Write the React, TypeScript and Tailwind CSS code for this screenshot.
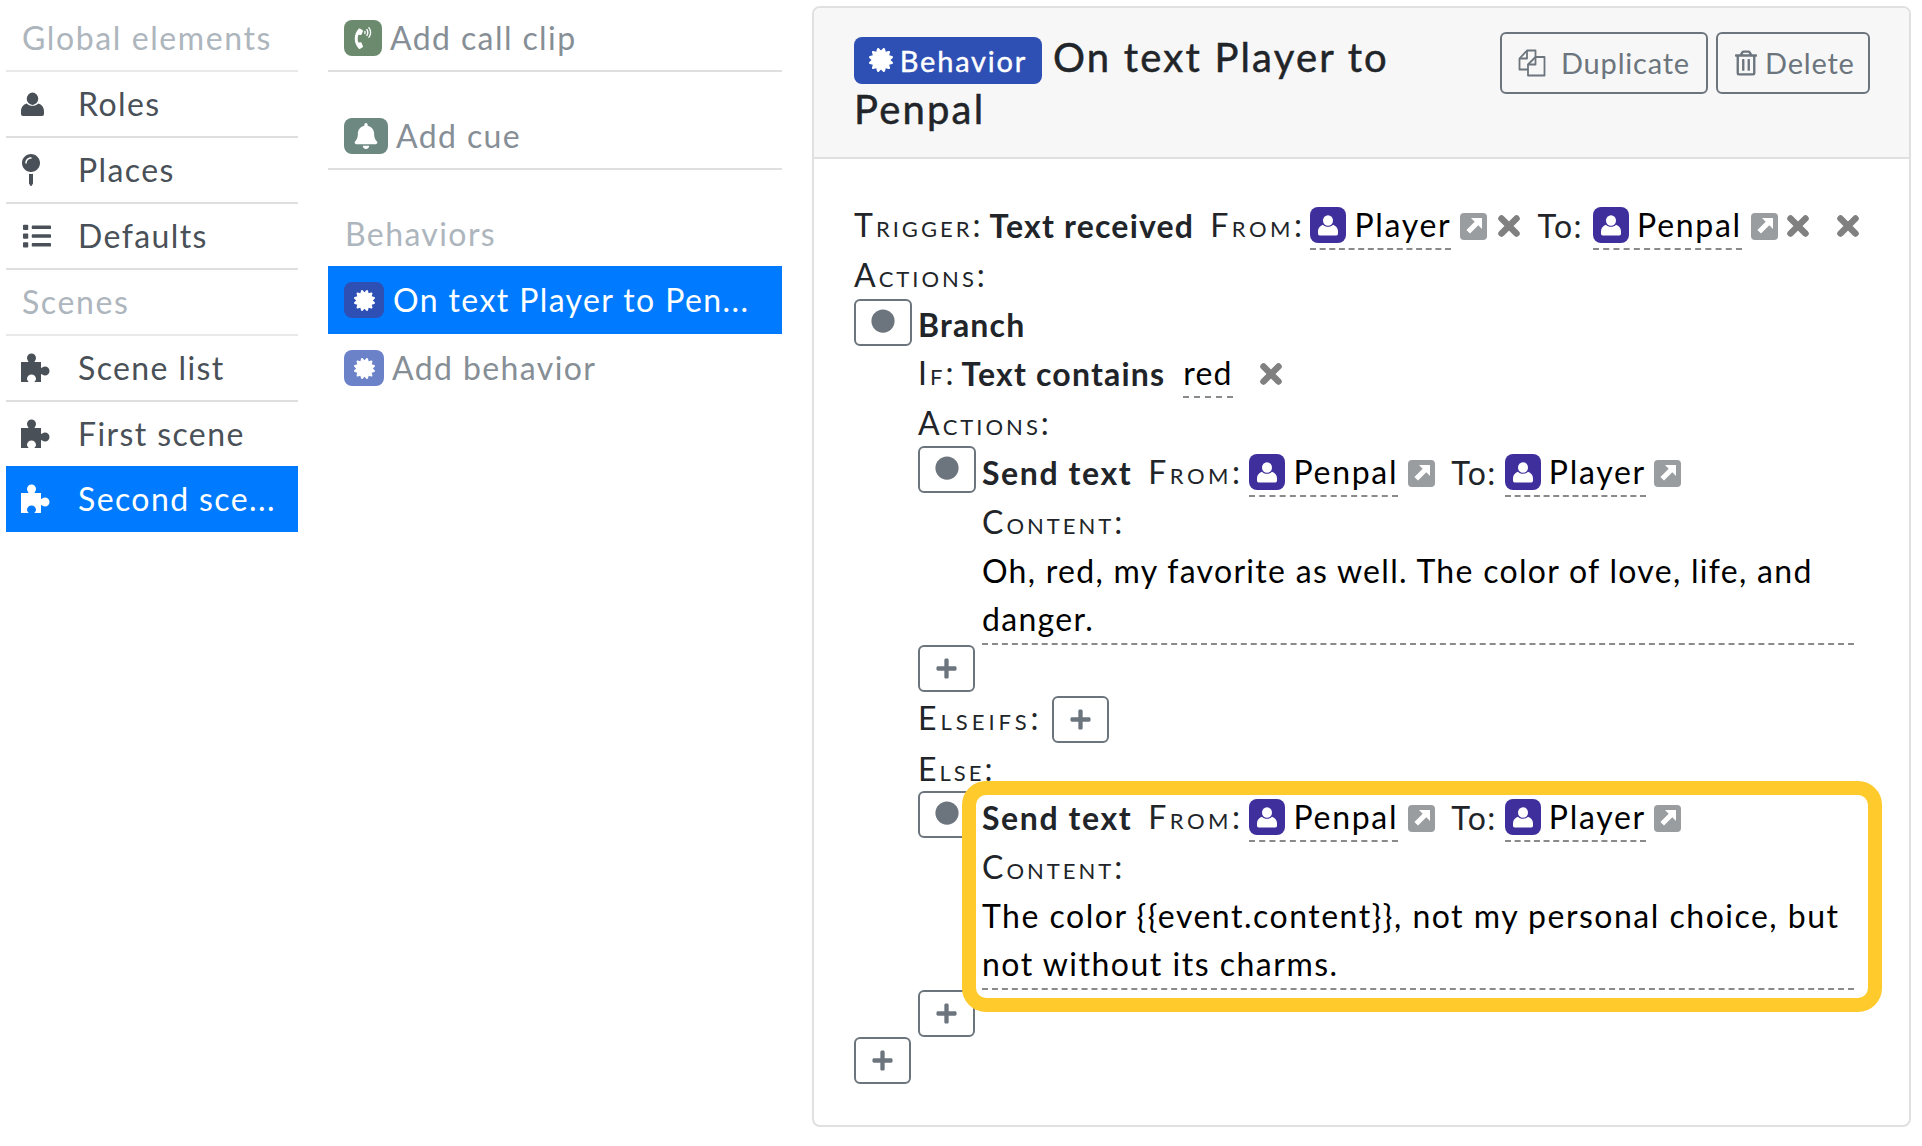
import React from "react";
import { FaBell, FaCertificate, FaCircle, FaList, FaMapPin, FaPlus, FaRegTrashAlt, FaPhoneVolume } from "react-icons/fa";

function Person({ className }: { className?: string }) {
  return (
    <svg viewBox="0 0 24 26" className={className} fill="currentColor">
      <ellipse cx="12" cy="7" rx="6" ry="6.4" />
      <path d="M2 25 a2 2 0 0 1-2-2 v-3 c0-4 2.5-7 6-8 c1.500 1.600 3.500 2.400 6 2.400 s4.500-.8 6-2.400 c3.500 1 6 4 6 8 v3 a2 2 0 0 1-2 2 z" />
    </svg>
  );
}

function Puzzle() {
  return (
    <svg viewBox="0 0 30 30" className="w-[30px] h-[30px]" fill="currentColor">
      <path d="M0 9 h7.500 c0-1-1.500-2-1.500-4 a4.500 4.500 0 0 1 9 0 c0 2-1.500 3-1.500 4 h6.500 v6 c1 0 2-1.500 4-1.500 a4.500 4.500 0 0 1 0 9 c-2 0-3-1.500-4-1.500 v8 h-6.500 c0-1 1.500-1.500 1.500-3 a4.500 4.500 0 0 0-9 0 c0 1.500 1.500 2 1.500 3 H0 z" />
    </svg>
  );
}

function CopyIcon() {
  return (
    <svg viewBox="0 0 28 28" className="w-[28px] h-[28px] shrink-0" fill="none" stroke="currentColor" strokeWidth="1.800" strokeLinejoin="round">
      <path d="M10 20.500 H1.500 V9.500 L9 1.500 H17.500 V8" />
      <path d="M9 1.500 V9.500 H1.500" />
      <path d="M17.500 8 H26.500 V26.500 H10 V15.500 Z" />
      <path d="M17.500 8 V15.500 H10" />
    </svg>
  );
}

function NavRow({ icon, label, active, last }: { icon: React.ReactNode; label: string; active?: boolean; last?: boolean }) {
  return (
    <div className={`flex items-center ${last ? "h-[64px]" : "h-[66px]"} pl-[15px] text-[32px] tracking-[1.4px] ${active ? "bg-[#007bff] text-white" : "text-[#495057]"} ${last || active ? "" : "border-b-2 border-[#dfdfdf]"}`}>
      <span className="w-[57px] flex items-center shrink-0">{icon}</span>
      <span>{label}</span>
    </div>
  );
}

function NavHead({ label }: { label: string }) {
  return (
    <div className="flex items-center h-[66px] pl-[16px] text-[32px] tracking-[1.6px] text-[#adb5bd] border-b-2 border-[#e9e9e9]">{label}</div>
  );
}

function Tile({ color, w, children }: { color: string; w: string; children: React.ReactNode }) {
  return <span className={`${color} ${w} h-9 rounded-lg flex items-center justify-center text-white shrink-0`}>{children}</span>;
}

function Ext() {
  return (
    <svg viewBox="0 0 27 27" className="w-[27px] h-[27px] shrink-0">
      <rect width="27" height="27" rx="4" fill="#9a9da0" />
      <path d="M11 5 h11 v11 l-3.700-3.700 -8.300 8.300 -3.600-3.600 8.300-8.300 z" fill="#fff" />
    </svg>
  );
}

function Cross({ className }: { className?: string }) {
  return (
    <svg viewBox="0 0 24 24" className={`w-6 h-6 shrink-0 ${className ?? ""}`} stroke="#808080" strokeWidth="6.500" strokeLinecap="round">
      <path d="M4.500 4.500 L19.500 19.500 M19.500 4.500 L4.500 19.500" />
    </svg>
  );
}

function Chip({ name }: { name: string }) {
  return (
    <span className="flex items-center gap-[8px] h-full border-b-2 border-dashed border-[#8a8a8a] text-black tracking-[1.700px]">
      <span className="w-9 h-9 rounded-lg bg-[#3f2f9c] text-white flex items-center justify-center shrink-0">
        <Person className="w-[20px] h-[23px]" />
      </span>
      {name}
    </span>
  );
}

const Label = ({ children, className, t = "tracking-[3px]" }: { children: React.ReactNode; className?: string; t?: string }) => (
  <span className={`[font-variant-caps:small-caps] ${t} text-[#212529] mb-[3px] ${className ?? ""}`}>{children}</span>
);

const Strong = ({ children, className, t = "tracking-[1.200px]" }: { children: React.ReactNode; className?: string; t?: string }) => (
  <b className={`font-bold ${t} text-[#212529] ${className ?? ""}`}>{children}</b>
);

function SmallBtn({ kind, w, className }: { kind: "dot" | "plus"; w: string; className?: string }) {
  return (
    <span className={`${w} h-[47px] shrink-0 border-2 border-[#6c757d] rounded-md bg-white text-[#6c757d] flex items-center justify-center ${className ?? ""}`}>
      {kind === "dot" ? <FaCircle className="w-[24px] h-[24px] mb-[3px]" /> : <FaPlus className="w-[23px] h-[23px]" />}
    </span>
  );
}

function SendHeader() {
  return (
    <div className="flex items-center h-12">
      <Strong t="tracking-[1.600px]">Send text</Strong>
      <Label t="tracking-[3.500px]" className="ml-[16px] mr-[6px]">From:</Label>
      <Chip name="Penpal" />
      <span className="ml-[10px]"><Ext /></span>
      <span className="ml-[16px] mr-[8px] text-[#212529] tracking-[1.5px]">To:</span>
      <Chip name="Player" />
      <span className="ml-[8px]"><Ext /></span>
    </div>
  );
}

export default function App() {
  return (
    <div className="flex items-start bg-white w-[1922px] h-[1146px] overflow-hidden pt-[6px] font-['Lato','Liberation_Sans',sans-serif]">
      <div className="ml-[6px] w-[292px] shrink-0">
        <NavHead label="Global elements" />
        <NavRow icon={<Person className="w-[23px] h-[27px]" />} label="Roles" />
        <NavRow icon={<FaMapPin className="w-[28px] h-[32px] -ml-[4px]" />} label="Places" />
        <NavRow icon={<FaList className="w-[32px] h-[28px]" />} label="Defaults" />
        <NavHead label="Scenes" />
        <NavRow icon={<Puzzle />} label="Scene list" />
        <NavRow icon={<Puzzle />} label="First scene" last />
        <NavRow icon={<Puzzle />} label="Second sce..." active />
      </div>

      <div className="ml-[30px] w-[454px] shrink-0 text-[32px] tracking-[1.400px]">
        <div className="flex items-center h-[66px] pl-[16px] gap-[8px] text-[#868e96] border-b-2 border-[#dfdfdf]">
          <Tile color="bg-[#6b8a6e]" w="w-[38px]"><FaPhoneVolume className="w-[22px] h-[22px]" /></Tile>
          Add call clip
        </div>
        <div className="flex items-center h-[66px] mt-[32px] pl-[16px] gap-[8px] text-[#868e96] border-b-2 border-[#dfdfdf]">
          <Tile color="bg-[#6c8880]" w="w-[44px]"><FaBell className="w-[24px] h-[26px]" /></Tile>
          Add cue
        </div>
        <div className="flex items-center h-[64px] mt-[32px] pl-[17px] text-[#adb5bd]">Behaviors</div>
        <div className="flex items-center h-[68px] pl-[16px] gap-[9px] bg-[#007bff] text-white">
          <Tile color="bg-[#2e4fb3]" w="w-[40px]"><FaCertificate className="w-[21px] h-[21px]" /></Tile>
          On text Player to Pen...
        </div>
        <div className="flex items-center h-[68px] pl-[16px] gap-[8px] text-[#868e96]">
          <Tile color="bg-[#6b82c9]" w="w-[40px]"><FaCertificate className="w-[21px] h-[21px]" /></Tile>
          Add behavior
        </div>
      </div>

      <div className="ml-[30px] w-[1099px] h-[1121px] shrink-0 border-2 border-[#e0e0e0] rounded-lg overflow-hidden text-[32px]">
        <div className="flex items-start justify-between h-[151px] bg-[#f7f7f7] border-b-2 border-[#e0e0e0] pl-[40px] pr-[39px] pt-[24px]">
          <div className="w-[590px] text-[40px] leading-[51px] tracking-[2.200px] [-webkit-text-stroke:0.5px_#212529] text-[#212529]">
            <span className="inline-flex items-center align-baseline h-[47px] w-[188px] justify-center gap-[7px] rounded-lg bg-[#2e4fb3] text-white text-[29px] tracking-[1.800px] [-webkit-text-stroke:0.4px_#fff] mr-[11px] leading-none">
              <FaCertificate className="w-[24px] h-[24px]" />
              Behavior
            </span>
            On text Player to Penpal
          </div>
          <div className="flex gap-[8px]">
            <span className="flex items-center gap-[15px] pl-[16px] w-[208px] h-[62px] border-2 border-[#6c757d] rounded-md text-[#6c757d] text-[29px] tracking-[0.8px]">
              <CopyIcon />
              Duplicate
            </span>
            <span className="flex items-center gap-[8px] pl-[17px] w-[154px] h-[62px] border-2 border-[#6c757d] rounded-md text-[#6c757d] text-[29px] tracking-[0.8px]">
              <FaRegTrashAlt className="w-[22px] h-[26px]" />
              Delete
            </span>
          </div>
        </div>

        <div className="pl-[40px] pr-[40px] pt-[43px]">
          <div className="flex items-center h-12">
            <Label>Trigger:</Label>
            <Strong className="ml-[6px]">Text received</Strong>
            <Label t="tracking-[3.500px]" className="ml-[16px] mr-[5px]">From:</Label>
            <Chip name="Player" />
            <span className="ml-[9px]"><Ext /></span>
            <Cross className="ml-[10px]" />
            <span className="ml-[16px] mr-[10px] text-[#212529] tracking-[1.5px]">To:</span>
            <Chip name="Penpal" />
            <span className="ml-[9px]"><Ext /></span>
            <Cross className="ml-[8px]" />
            <Cross className="ml-[26px]" />
          </div>
          <div className="flex items-center h-12 mt-[2px]"><Label>Actions:</Label></div>

          <div className="flex mt-[-1px]">
            <SmallBtn kind="dot" w="w-[58px]" />
            <div className="ml-[6px] flex-1 min-w-0">
              <div className="flex items-center h-12 mt-[2px]"><Strong>Branch</Strong></div>
              <div className="flex items-center h-12 mt-[1px]">
                <Label>If:</Label>
                <Strong className="ml-[5px]">Text contains</Strong>
                <span className="ml-[18px] h-full flex items-center border-b-2 border-dashed border-[#8a8a8a] text-black tracking-[1.200px]">red</span>
                <Cross className="ml-[26px]" />
              </div>
              <div className="flex items-center h-12 mt-[2px]"><Label>Actions:</Label></div>

              <div className="flex mt-[-2px]">
                <SmallBtn kind="dot" w="w-[58px]" />
                <div className="ml-[6px] flex-1 min-w-0">
                  <div className="mt-[3px]"><SendHeader /></div>
                  <div className="flex items-center h-12 mt-[2px]"><Label>Content:</Label></div>
                  <div className="leading-[48px] border-b-2 border-dashed border-[#8a8a8a] text-black w-[872px] tracking-[1.300px]">
                    Oh, red, my favorite as well. The color of love, life, and danger.
                  </div>
                </div>
              </div>
              <SmallBtn kind="plus" w="w-[57px]" />

              <div className="flex items-center h-[47px] mt-[4px]">
                <Label t="tracking-[4px]">Elseifs:</Label>
                <SmallBtn kind="plus" w="w-[57px]" className="ml-[9px]" />
              </div>
              <div className="flex items-center h-12 mt-[3px]"><Label>Else:</Label></div>

              <div className="relative flex mt-[-3px]">
                <SmallBtn kind="dot" w="w-[58px]" />
                <div className="ml-[6px] flex-1 min-w-0">
                  <div className="mt-[3px]"><SendHeader /></div>
                  <div className="flex items-center h-12 mt-[2px]"><Label>Content:</Label></div>
                  <div className="leading-[48px] border-b-2 border-dashed border-[#8a8a8a] text-black w-[872px] tracking-[1.500px]">
                    The color {"{{event.content}}"}, not my personal choice, but not without its charms.
                  </div>
                </div>
                <div className="absolute left-[44px] top-[-10px] w-[920px] h-[231px] border-[14px] border-[#ffca2c] rounded-[24px]" />
              </div>
              <SmallBtn kind="plus" w="w-[57px]" />
            </div>
          </div>
          <SmallBtn kind="plus" w="w-[57px]" />
        </div>
      </div>
    </div>
  );
}
